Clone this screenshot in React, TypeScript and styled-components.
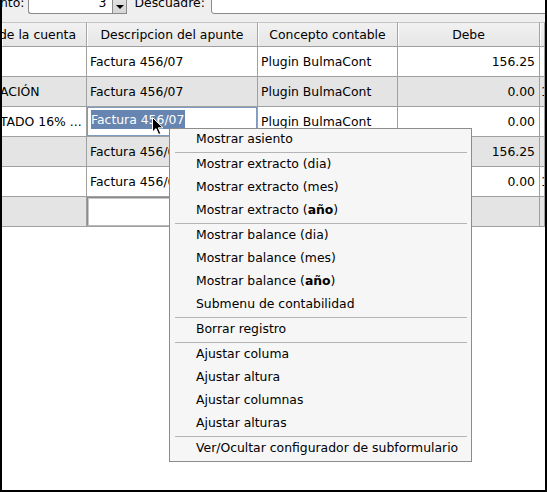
import styled, { createGlobalStyle } from "styled-components";

const GlobalStyle = createGlobalStyle`
  html, body {
    margin: 0;
    padding: 0;
    background: #efefef;
  }
  body {
    font-family: "DejaVu Sans", "Liberation Sans", sans-serif;
    font-size: 12.4px;
    color: #000;
  }
`;

const Window = styled.div`
  position: relative;
  width: 547px;
  height: 492px;
  box-sizing: border-box;
  border-left: 2px solid #000;
  border-right: 2px solid #000;
  border-bottom: 2px solid #000;
  background: #efefef;
  display: flex;
  flex-direction: column;
  overflow: hidden;
`;

const Toolbar = styled.div`
  display: flex;
  align-items: center;
  height: 22px;
  margin-top: -9px;
  margin-bottom: 9px;
  white-space: nowrap;
`;

const Label = styled.span<{ $before?: number; $after?: number }>`
  margin-left: ${(p) => p.$before ?? 0}px;
  margin-right: ${(p) => p.$after ?? 0}px;
`;

const SpinBox = styled.div`
  display: flex;
  width: 99px;
  height: 23px;
  margin-left: 1px;
`;

const SpinField = styled.div`
  flex: 1;
  box-sizing: border-box;
  background: #fff;
  border: 1px solid #8a8a8a;
  border-right: none;
  border-radius: 0 0 0 3px;
  text-align: right;
  padding-right: 6px;
  line-height: 22px;
`;

const SpinButton = styled.div`
  width: 15px;
  box-sizing: border-box;
  border: 1px solid #8a8a8a;
  background: linear-gradient(#e6e6e6, #d6d6d6);
  display: flex;
  align-items: flex-end;
  justify-content: center;
  padding-bottom: 4px;
`;

const Arrow = styled.div`
  width: 0;
  height: 0;
  border-left: 4px solid transparent;
  border-right: 4px solid transparent;
  border-top: 4px solid #000;
`;

const TextField = styled.div`
  flex: 1;
  height: 23px;
  box-sizing: border-box;
  background: #fff;
  border: 1px solid #8a8a8a;
  border-radius: 0 0 0 3px;
  margin-right: -4px;
`;

const Viewport = styled.div`
  flex: 1;
  background: #fff;
`;

const Grid = styled.div`
  display: grid;
  grid-template-columns: 85px 171px 140px 142px 1fr;
`;

const HeadCell = styled.div<{ $clip?: boolean }>`
  box-sizing: border-box;
  height: 25px;
  line-height: 23px;
  text-align: center;
  white-space: nowrap;
  overflow: hidden;
  background: linear-gradient(#f1f1f1, #e6e6e6);
  border-top: 1px solid #c4c4c4;
  border-bottom: 1px solid #a0a0a0;
  border-right: 1px solid #a4a4a4;
  box-shadow: inset 1px 0 #fdfdfd;
  ${(p) => p.$clip && "text-align: left; text-indent: -3px;"}
`;

const Cell = styled.div<{ $striped?: boolean; $align?: "left" | "right"; $clip?: boolean }>`
  box-sizing: border-box;
  height: 30px;
  line-height: 29px;
  padding: 0 4px 0 3px;
  white-space: nowrap;
  overflow: hidden;
  text-align: ${(p) => p.$align ?? "left"};
  background: ${(p) => (p.$striped ? "#e4e4e4" : "#fff")};
  border-right: 1px solid #a0a0a0;
  border-bottom: 1px solid #a0a0a0;
  ${(p) => p.$clip && "padding: 0; text-indent: -2px;"}
`;

const EditCell = styled(Cell)`
  padding: 0;
`;

const ActiveEditor = styled.div`
  height: 29px;
  box-sizing: border-box;
  border: 1px solid #7f9cc0;
  background: #fff;
  padding: 2px 0 0 3px;
  line-height: 19px;
`;

const Selection = styled.span`
  display: inline-block;
  background: #6685b0;
  color: #fff;
  padding-right: 1px;
`;

const EmptyEditor = styled.div`
  height: 29px;
  box-sizing: border-box;
  border: 1px solid #8c8c8c;
  border-right-color: #b8b8b8;
  border-bottom-color: #b8b8b8;
  box-shadow: inset 1px 1px #c8c8c8;
  background: #fff;
`;

const Menu = styled.div`
  position: absolute;
  left: 167px;
  top: 128px;
  width: 303px;
  box-sizing: border-box;
  background: #f6f6f6;
  border: 1px solid #8c8c8c;
  display: flex;
  flex-direction: column;
`;

const MenuItem = styled.div`
  height: 23px;
  line-height: 20px;
  padding-left: 26px;
  white-space: nowrap;
`;

const Strong = styled.span`
  font-weight: bold;
`;

const Separator = styled.div`
  height: 1px;
  background: #b4b4b4;
  margin: 0 4px 1px 5px;
`;

const Pointer = styled.svg`
  position: absolute;
  left: 149px;
  top: 116px;
`;

type Row = {
  striped: boolean;
  cuenta: string;
  desc: string | null;
  concepto: string;
  debe: string;
  next: string;
  edit?: "active" | "empty";
};

const rows: Row[] = [
  { striped: false, cuenta: "", desc: "Factura 456/07", concepto: "Plugin BulmaCont", debe: "156.25", next: "" },
  { striped: true, cuenta: "ACIÓN", desc: "Factura 456/07", concepto: "Plugin BulmaCont", debe: "0.00", next: "1" },
  { striped: false, cuenta: "TADO 16% ...", desc: "Factura 456/07", concepto: "Plugin BulmaCont", debe: "0.00", next: "", edit: "active" },
  { striped: true, cuenta: "", desc: "Factura 456/07", concepto: "Plugin BulmaCont", debe: "156.25", next: "" },
  { striped: false, cuenta: "", desc: "Factura 456/07", concepto: "Plugin BulmaCont", debe: "0.00", next: "1" },
  { striped: true, cuenta: "", desc: null, concepto: "", debe: "", next: "", edit: "empty" },
];

const year = (word: string) => (
  <>
    {word} (<Strong>año</Strong>)
  </>
);

const menu: (React.ReactNode | null)[] = [
  "Mostrar asiento",
  null,
  "Mostrar extracto (dia)",
  "Mostrar extracto (mes)",
  year("Mostrar extracto"),
  null,
  "Mostrar balance (dia)",
  "Mostrar balance (mes)",
  year("Mostrar balance"),
  "Submenu de contabilidad",
  null,
  "Borrar registro",
  null,
  "Ajustar columa",
  "Ajustar altura",
  "Ajustar columnas",
  "Ajustar alturas",
  null,
  "Ver/Ocultar configurador de subformulario",
];

function App() {
  return (
    <>
      <GlobalStyle />
      <Window>
        <Toolbar>
          <Label $before={-2} $after={3}>
            nto:
          </Label>
          <SpinBox>
            <SpinField>3</SpinField>
            <SpinButton>
              <Arrow />
            </SpinButton>
          </SpinBox>
          <Label $before={7} $after={6}>
            Descuadre:
          </Label>
          <TextField />
        </Toolbar>
        <Viewport>
          <Grid>
            <HeadCell $clip>de la cuenta</HeadCell>
            <HeadCell>Descripcion del apunte</HeadCell>
            <HeadCell>Concepto contable</HeadCell>
            <HeadCell>Debe</HeadCell>
            <HeadCell />
            {rows.map((r, i) => (
              <div key={i} style={{ display: "contents" }}>
                <Cell $striped={r.striped} $clip>
                  {r.cuenta}
                </Cell>
                {r.edit ? (
                  <EditCell $striped={r.striped}>
                    {r.edit === "active" ? (
                      <ActiveEditor>
                        <Selection>{r.desc}</Selection>
                      </ActiveEditor>
                    ) : (
                      <EmptyEditor />
                    )}
                  </EditCell>
                ) : (
                  <Cell $striped={r.striped}>{r.desc}</Cell>
                )}
                <Cell $striped={r.striped}>{r.concepto}</Cell>
                <Cell $striped={r.striped} $align="right">
                  {r.debe}
                </Cell>
                <Cell $striped={r.striped} style={{ padding: "0 0 0 1px" }}>
                  {r.next}
                </Cell>
              </div>
            ))}
          </Grid>
        </Viewport>
        <Menu>
          {menu.map((m, i) =>
            m === null ? <Separator key={i} /> : <MenuItem key={i}>{m}</MenuItem>
          )}
        </Menu>
        <Pointer width="13" height="20" viewBox="0 0 13 20">
          <path
            d="M1.5 1.5 L1.5 16 L5 12.6 L7.6 18.5 L9.8 17.5 L7.3 11.8 L12 11.8 Z"
            fill="#000"
            stroke="#fff"
            strokeWidth="1"
            strokeLinejoin="round"
          />
        </Pointer>
      </Window>
    </>
  );
}

export default App;
